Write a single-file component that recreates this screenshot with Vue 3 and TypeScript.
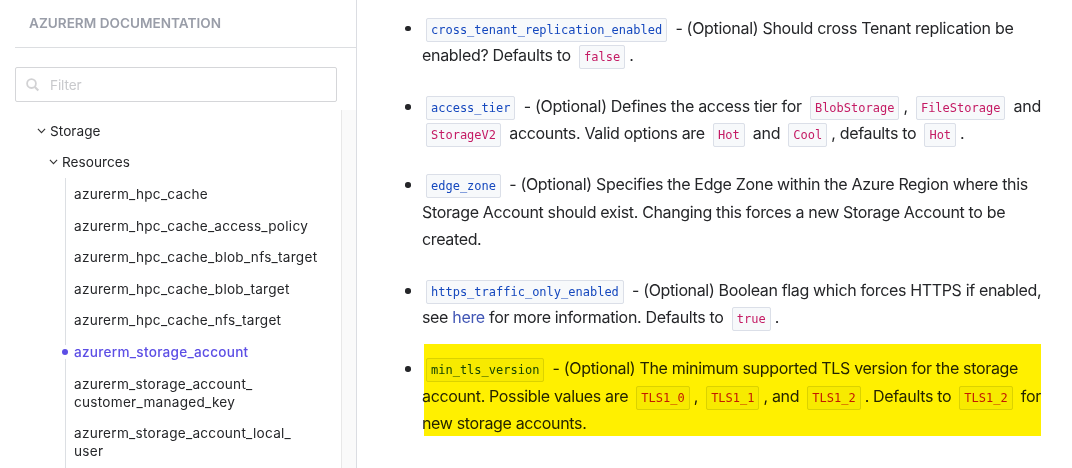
<script setup lang="ts">
type Kind = 'text' | 'name' | 'value' | 'link'
interface Segment { kind: Kind; text: string }
interface Line { spacing: number; segments: Segment[] }
interface Entry { marked?: boolean; lines: Line[] }

const t = (text: string): Segment => ({ kind: 'text', text })
const n = (text: string): Segment => ({ kind: 'name', text })
const v = (text: string): Segment => ({ kind: 'value', text })
const a = (text: string): Segment => ({ kind: 'link', text })
const line = (spacing: number, ...segments: Segment[]): Line => ({ spacing, segments })

const entries: Entry[] = [
  { lines: [
    line(-0.31, n('cross_tenant_replication_enabled'), t(' - (Optional) Should cross Tenant replication be')),
    line(-0.31, t('enabled? Defaults to '), v('false'), t('.')),
  ] },
  { lines: [
    line(-0.3, n('access_tier'), t(' - (Optional) Defines the access tier for '), v('BlobStorage'), t(', '), v('FileStorage'), t(' and')),
    line(-0.32, v('StorageV2'), t(' accounts. Valid options are '), v('Hot'), t(' and '), v('Cool'), t(', defaults to '), v('Hot'), t('.')),
  ] },
  { lines: [
    line(-0.33, n('edge_zone'), t(' - (Optional) Specifies the Edge Zone within the Azure Region where this')),
    line(-0.35, t('Storage Account should exist. Changing this forces a new Storage Account to be')),
    line(-0.35, t('created.')),
  ] },
  { lines: [
    line(-0.35, n('https_traffic_only_enabled'), t(' - (Optional) Boolean flag which forces HTTPS if enabled,')),
    line(-0.33, t('see '), a('here'), t(' for more information. Defaults to '), v('true'), t('.')),
  ] },
  { marked: true, lines: [
    line(-0.32, n('min_tls_version'), t(' - (Optional) The minimum supported TLS version for the storage')),
    line(-0.34, t('account. Possible values are '), v('TLS1_0'), t(', '), v('TLS1_1'), t(', and '), v('TLS1_2'), t('. Defaults to '), v('TLS1_2'), t(' for')),
    line(-0.35, t('new storage accounts.')),
  ] },
]

const resources: { rows: string[]; active?: boolean }[] = [
  { rows: ['azurerm_hpc_cache'] },
  { rows: ['azurerm_hpc_cache_access_policy'] },
  { rows: ['azurerm_hpc_cache_blob_nfs_target'] },
  { rows: ['azurerm_hpc_cache_blob_target'] },
  { rows: ['azurerm_hpc_cache_nfs_target'] },
  { rows: ['azurerm_storage_account'], active: true },
  { rows: ['azurerm_storage_account_', 'customer_managed_key'] },
  { rows: ['azurerm_storage_account_local_', 'user'] },
]
</script>

<template>
  <div class="page">
    <aside class="sidebar">
      <h2 class="title">AZURERM DOCUMENTATION</h2>
      <label class="filter">
        <svg width="14" height="14" viewBox="0 0 14 14" fill="none" stroke="#d2d2d4" stroke-width="1.8">
          <circle cx="5.5" cy="5.6" r="4.4" />
          <path d="M8.8 8.9l3.5 3.5" stroke-width="2.1" />
        </svg>
        <span>Filter</span>
      </label>
      <div class="scroller">
        <nav class="tree">
          <div class="node root">
            <svg width="9" height="6" viewBox="0 0 9 6" fill="none" stroke="#333" stroke-width="1.1"><path d="M.9.9l3.6 3.7L8.1.9" /></svg>
            Storage
          </div>
          <div class="node branch">
            <svg width="9" height="6" viewBox="0 0 9 6" fill="none" stroke="#333" stroke-width="1.1"><path d="M.9.9l3.6 3.7L8.1.9" /></svg>
            Resources
          </div>
          <ul class="leaves">
            <li v-for="r in resources" :key="r.rows[0]" :class="{ active: r.active }">
              <div v-for="row in r.rows" :key="row">{{ row }}</div>
            </li>
          </ul>
        </nav>
        <div class="track"></div>
      </div>
    </aside>
    <main class="content">
      <ul class="entries">
        <li v-for="(e, i) in entries" :key="i" :class="{ marked: e.marked }">
          <div v-for="(l, j) in e.lines" :key="j" class="line" :style="{ letterSpacing: l.spacing + 'px' }"><span v-for="(s, k) in l.segments" :key="k" :class="s.kind">{{ s.text }}</span></div>
        </li>
      </ul>
    </main>
  </div>
</template>

<style>
html, body { margin: 0; overflow: hidden; background: #fff; }
</style>

<style scoped>
.page { display: flex; width: 1072px; height: 468px; overflow: hidden; background: #fff; color: #252629; font-family: Inter, "Liberation Sans", sans-serif; }
.sidebar { box-sizing: border-box; display: flex; flex-direction: column; width: 357px; flex: none; padding-left: 15px; border-right: 1px solid #dbdde2; }
.title { box-sizing: border-box; height: 48px; margin: 0; padding-left: 14px; border-bottom: 1px solid #dcdee1; font-size: 13.6px; font-weight: 600; line-height: 46px; color: #999da8; white-space: nowrap; }
.filter { box-sizing: border-box; display: flex; align-items: center; gap: 10px; width: 322px; height: 35px; margin: 19px 0 8px; padding-left: 10px; border: 1px solid #d5d6d9; border-radius: 2px; font-size: 13.6px; letter-spacing: -0.1px; color: #c8c9cc; flex: none; }
.scroller { display: flex; flex: 1; min-height: 0; }
.tree { box-sizing: border-box; display: flex; flex-direction: column; flex: 1; overflow: hidden; font-size: 13.6px; line-height: 18px; padding-top: 12px; }
.track { box-sizing: border-box; width: 15px; flex: none; background: #fafafa; border-left: 1px solid #e8e8e8; }
.node { display: flex; align-items: center; gap: 4px; height: 18px; margin-bottom: 13px; flex: none; letter-spacing: 0.05px; }
.root { padding-left: 22px; }
.branch { padding-left: 34px; margin-bottom: 7px; }
.leaves { flex: 1; list-style: none; margin: 0 0 0 50px; padding: 7px 0 0; border-left: 1px solid #dcdfe3; }
.leaves li { position: relative; padding-left: 8px; margin-bottom: 13.6px; white-space: nowrap; letter-spacing: 0.26px; }
.leaves .active { color: #5c4ee5; font-weight: 500; }
.active::before { content: ""; position: absolute; left: -4px; top: 6px; width: 6px; height: 6px; border-radius: 50%; background: #5c4ee5; box-shadow: 0 0 0 4px #fff; }
.content { flex: 1; padding: 14.7px 0 0 65px; }
.entries { list-style: none; margin: 0; padding: 0; }
.entries li { position: relative; width: 630px; margin-bottom: 24px; font-size: 16px; line-height: 27.2px; }
.entries li::before { content: ""; position: absolute; left: -17px; top: 11px; width: 5.5px; height: 5.5px; border-radius: 50%; background: #252629; }
.line { height: 27.2px; white-space: pre; }
.name, .value { margin: 0 4px; padding: 4px; border: 1px solid #dbdfe8; border-radius: 2px; background: #f7f9fb; font: 12px "DejaVu Sans Mono", monospace; letter-spacing: 0; }
.name { color: #1548be; }
.value { color: #c41b64; }
.link { color: #4156b5; }
.marked::after { content: ""; position: absolute; left: 2px; top: -11.3px; width: 617px; height: 92px; background: #fff000; mix-blend-mode: multiply; }
</style>
